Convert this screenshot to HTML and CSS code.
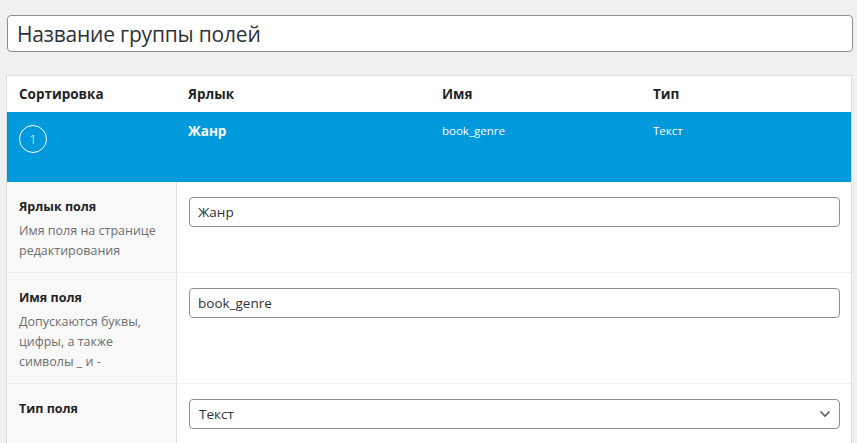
FILE: index.html
```html
<!DOCTYPE html>
<html lang="ru">
<head>
    <meta charset="UTF-8">
    <title>Группа полей</title>
    <link rel="stylesheet" href="styles.css">
</head>
<body>
    <div class="title-wrap">
        <input type="text" class="title-input" value="Название группы полей">
    </div>

    <div class="fields-box">
        <div class="fields-head">
            <div>Сортировка</div>
            <div>Ярлык</div>
            <div>Имя</div>
            <div>Тип</div>
        </div>

        <div class="field-row">
            <div><span class="order">1</span></div>
            <div class="field-label">Жанр</div>
            <div class="field-small">book_genre</div>
            <div class="field-small">Текст</div>
        </div>

        <div class="settings">
            <div class="setting">
                <div class="setting-label">
                    <label for="fLabel">Ярлык поля</label>
                    <p>Имя поля на странице редактирования</p>
                </div>
                <div class="setting-input">
                    <input type="text" id="fLabel" value="Жанр">
                </div>
            </div>
            <div class="setting">
                <div class="setting-label">
                    <label for="fName">Имя поля</label>
                    <p>Допускаются буквы, цифры, а также символы _ и -</p>
                </div>
                <div class="setting-input">
                    <input type="text" id="fName" value="book_genre">
                </div>
            </div>
            <div class="setting">
                <div class="setting-label">
                    <label for="fType">Тип поля</label>
                    <p>&nbsp;</p>
                </div>
                <div class="setting-input">
                    <div class="select">
                        <span>Текст</span>
                        <svg width="12" height="8" viewBox="0 0 12 8"><path d="M1.5 1.5 L6 6 L10.5 1.5" fill="none" stroke="#50575e" stroke-width="1.6"/></svg>
                    </div>
                </div>
            </div>
        </div>
    </div>
</body>
</html>
```

FILE: styles.css
```css
body {
    margin: 0;
    background: #f0f0f1;
    font-family: 'Open Sans', 'Noto Sans', sans-serif;
    color: #1d2327;
    height: 443px;
    overflow: hidden;
}
.title-wrap {
    padding: 15px 4px 0 7px;
}
.title-input {
    box-sizing: border-box;
    width: 100%;
    height: 37px;
    padding: 0 9px;
    border: 1px solid #8c8f94;
    border-radius: 4px;
    background: #fff;
    font-family: inherit;
    font-size: 21px;
    color: #2c3338;
    letter-spacing: -0.2px;
}
.fields-box {
    margin: 23px 5px 0 6px;
    border: 1px solid #dcdcde;
    border-bottom: none;
    background: #fff;
}
.fields-head,
.field-row {
    display: grid;
    grid-template-columns: 169px 254px 211px 1fr;
}
.fields-head {
    height: 36px;
    align-items: center;
    font-size: 13.5px;
    font-weight: 700;
    color: #1d2327;
}
.fields-head > div,
.field-row > div {
    padding-left: 12px;
}
.field-row {
    height: 70px;
    background: #0099dc;
    color: #fff;
    box-sizing: border-box;
    padding-top: 10px;
}
.order {
    display: inline-flex;
    align-items: center;
    justify-content: center;
    width: 26px;
    height: 26px;
    margin-top: 3px;
    border: 1px solid #fff;
    border-radius: 50%;
    font-size: 12px;
    font-weight: 300;
}
.field-label {
    font-size: 13.5px;
    font-weight: 700;
    line-height: 18px;
}
.field-small {
    font-size: 11.5px;
    line-height: 18px;
}
.setting {
    display: grid;
    grid-template-columns: 170px 1fr;
    border-bottom: 1px solid #eeeeee;
}
.setting-label {
    background: #f9f9f9;
    border-right: 1px solid #e1e1e1;
    padding: 15px 12px 11px;
}
.setting-label label {
    display: block;
    font-size: 12.5px;
    font-weight: 700;
    line-height: 20px;
    color: #1d2327;
}
.setting-label p {
    margin: 4px 0 0;
    font-size: 12.5px;
    line-height: 20px;
    color: #6e6e6e;
}
.setting-input {
    padding: 15px 11px 11px 12px;
}
.setting-input input,
.select {
    box-sizing: border-box;
    width: 100%;
    height: 30px;
    padding: 0 8px;
    border: 1px solid #8c8f94;
    border-radius: 4px;
    background: #fff;
    font-family: inherit;
    font-size: 13.5px;
    color: #2c3338;
}
.select {
    display: flex;
    align-items: center;
    justify-content: space-between;
    padding: 0 8px 0 9px;
}
```
